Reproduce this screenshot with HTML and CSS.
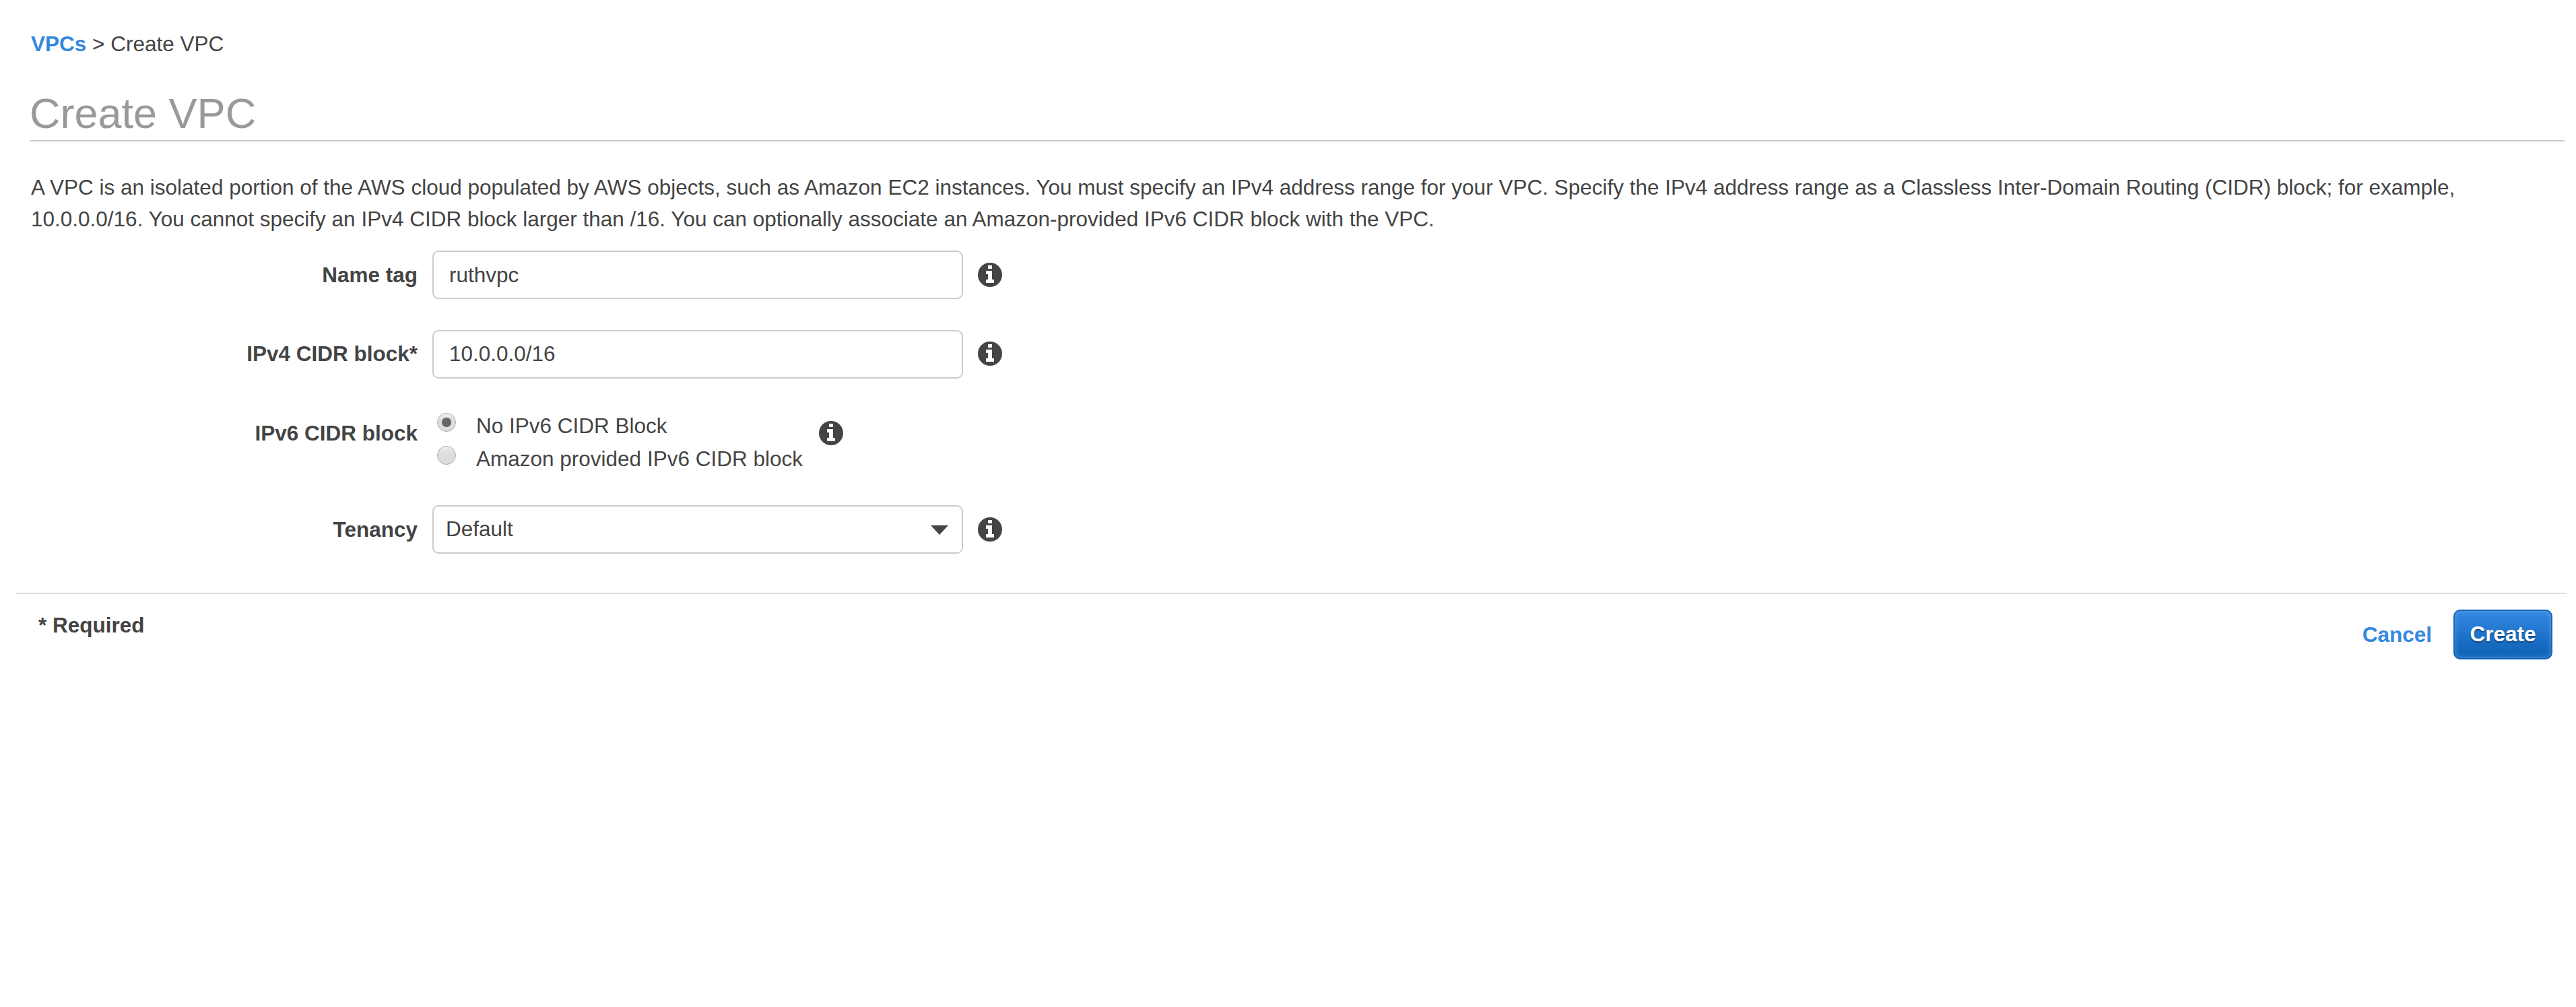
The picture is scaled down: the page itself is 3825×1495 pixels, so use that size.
FILE: index.html
```html
<!DOCTYPE html>
<html lang="en">
<head>
<meta charset="utf-8">
<title>Create VPC</title>
<link rel="stylesheet" href="styles.css">
</head>
<body>
<svg class="sprite" aria-hidden="true">
  <symbol id="info" viewBox="0 0 36 36">
    <circle cx="18" cy="18" r="18" fill="#444"/>
    <path fill="#fff" d="M15 4h6v5h-6zM12 12h9v13h3v5H12v-5h3v-8h-3z"/>
  </symbol>
</svg>
<main class="page">
  <nav class="breadcrumb"><a class="link" href="#">VPCs</a> &gt; Create VPC</nav>
  <h1 class="title">Create VPC</h1>
  <p class="intro">A VPC is an isolated portion of the AWS cloud populated by AWS objects, such as Amazon EC2 instances. You must specify an IPv4 address range for your VPC. Specify the IPv4 address range as a Classless Inter-Domain Routing (CIDR) block; for example, 10.0.0.0/16. You cannot specify an IPv4 CIDR block larger than /16. You can optionally associate an Amazon-provided IPv6 CIDR block with the VPC.</p>
  <form class="form">
    <div class="row">
      <label class="label" for="name">Name tag</label>
      <input class="field" id="name" type="text" value="ruthvpc">
      <svg class="info"><use href="#info"/></svg>
    </div>
    <div class="row row-cidr">
      <label class="label" for="cidr">IPv4 CIDR block*</label>
      <input class="field" id="cidr" type="text" value="10.0.0.0/16">
      <svg class="info"><use href="#info"/></svg>
    </div>
    <div class="row row-radios">
      <span class="label">IPv6 CIDR block</span>
      <div class="options">
        <label class="option"><input class="radio" type="radio" name="ipv6" checked>No IPv6 CIDR Block</label>
        <label class="option"><input class="radio" type="radio" name="ipv6">Amazon provided IPv6 CIDR block</label>
      </div>
      <svg class="info"><use href="#info"/></svg>
    </div>
    <div class="row">
      <label class="label" for="tenancy">Tenancy</label>
      <div class="select-wrap">
        <select class="field select" id="tenancy"><option>Default</option></select>
        <svg class="caret" viewBox="0 0 26 14"><path d="M0 0h26L13 14z" fill="#444"/></svg>
      </div>
      <svg class="info"><use href="#info"/></svg>
    </div>
  </form>
</main>
<footer class="footer">
  <span class="required">* Required</span>
  <div class="actions">
    <a class="link" href="#">Cancel</a>
    <button class="create" type="button">Create</button>
  </div>
</footer>
</body>
</html>
```
FILE: styles.css
```css
* { box-sizing: border-box; }

body {
  margin: 0;
  background: #fff;
  color: #444;
  font: 31.5px/46px "Liberation Sans", Arial, sans-serif;
}

.sprite { display: none; }

.page { padding: 42px 17px 0 44px; }

.link {
  color: #3388dd;
  font-weight: bold;
  text-decoration: none;
}

.breadcrumb { padding-left: 2px; }

.title {
  margin: 40px 0 0;
  border-bottom: 2px solid #ccc;
  color: #999;
  font-size: 63px;
  font-weight: normal;
  line-height: 80px;
}

.intro {
  margin: 45px 0 23px;
  padding-left: 2px;
  line-height: 47px;
}

.form {
  display: flex;
  flex-direction: column;
}

.row {
  display: flex;
  align-items: center;
  height: 72px;
}

.label {
  width: 576px;
  margin-right: 22px;
  font-weight: bold;
  text-align: right;
}

.row-cidr { margin-top: 46px; }

.row-cidr .label,
.row-cidr .info { margin-bottom: 2px; }

.field {
  display: block;
  width: 788px;
  height: 72px;
  margin: 0;
  padding: 0 23px;
  border: 2px solid #ccc;
  border-radius: 9px;
  outline: 0;
  background: #fff;
  color: #444;
  font: inherit;
}

.row-cidr .field { padding-bottom: 2px; }

.info {
  flex: none;
  width: 36px;
  height: 36px;
  margin-left: 22px;
}

.row-radios {
  align-items: flex-start;
  height: 98px;
  margin: 45px 0;
}

.row-radios .label { padding-top: 13px; }
.row-radios .info { margin: 18px 0 0 24px; }

.option {
  display: flex;
  height: 49px;
  line-height: 50px;
}

.radio {
  appearance: none;
  width: 28px;
  height: 28px;
  margin: 6px 30px 0 7px;
  border: 1px solid #aaa;
  border-radius: 50%;
  background: linear-gradient(#eee, #ddd 40%);
}

.radio:checked {
  background:
    radial-gradient(circle, #666 6.5px, transparent 7.5px),
    linear-gradient(#eee, #ddd 40%);
}

.select-wrap { position: relative; }

.select {
  appearance: none;
  padding: 0 18px 2px;
}

.caret {
  position: absolute;
  top: 30px;
  right: 22px;
  width: 26px;
  height: 14px;
  pointer-events: none;
}

.footer {
  display: flex;
  justify-content: space-between;
  margin: 58px 15px 0 23px;
  padding: 23px 20px 0 34px;
  border-top: 2px solid #ddd;
}

.required {
  font-weight: bold;
}

.actions {
  display: flex;
  align-items: center;
  gap: 32px;
}

.create {
  width: 147px;
  height: 74px;
  padding: 0 0 2px;
  border: 2px solid #1166bb;
  border-radius: 10px;
  background: linear-gradient(#2f84dd 10%, #1166bb 85%);
  box-shadow: inset 0 0 7px rgba(255, 255, 255, 0.28);
  color: #fff;
  font: inherit;
  font-weight: bold;
  text-shadow: 0 2px 2px rgba(0, 0, 0, 0.4);
}
```
